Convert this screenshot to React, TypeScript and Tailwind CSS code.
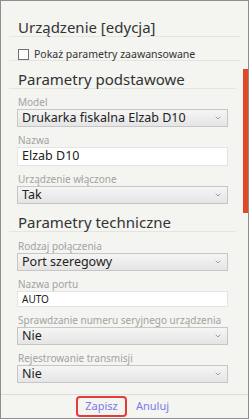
import { ChevronDown } from 'lucide-react'

interface Field {
  label: string
  value: string
  kind: 'select' | 'input' | 'small'
}

const basic: Field[] = [
  { label: 'Model', value: 'Drukarka fiskalna Elzab D10', kind: 'select' },
  { label: 'Nazwa', value: 'Elzab D10', kind: 'input' },
  { label: 'Urządzenie włączone', value: 'Tak', kind: 'select' },
]

const technical: Field[] = [
  { label: 'Rodzaj połączenia', value: 'Port szeregowy', kind: 'select' },
  { label: 'Nazwa portu', value: 'AUTO', kind: 'small' },
  { label: 'Sprawdzanie numeru seryjnego urządzenia', value: 'Nie', kind: 'select' },
  { label: 'Rejestrowanie transmisji', value: 'Nie', kind: 'select' },
]

function SectionTitle({ children, className = '' }: { children: string; className?: string }) {
  return (
    <div
      className={`mx-[8px] w-[227px] pl-[9px] border-b border-[#e4e4e0] text-[15px] leading-[18px] text-[#333] ${className}`}
    >
      {children}
    </div>
  )
}

function FieldRow({ field, first }: { field: Field; first?: boolean }) {
  return (
    <div className={`pl-[16px] ${first ? 'mt-[8px]' : 'mt-[7px]'}`}>
      <div className="pl-[1px] text-[10px] leading-[12px] text-[#a3a3a3]">{field.label}</div>
      {field.kind === 'select' && (
        <div className="mt-[1px] w-[211px] h-[18px] flex items-center justify-between pl-[4px] pr-[5px] border border-[#c6c6c6] bg-gradient-to-b from-[#f5f5f5] to-[#e5e5e5] text-[12.5px] text-[#222]">
          <span>{field.value}</span>
          <ChevronDown size={8} strokeWidth={2.5} className="text-[#8a8a8a]" />
        </div>
      )}
      {field.kind === 'input' && (
        <div className="mt-[1px] w-[211px] h-[19px] flex items-center pl-[4px] border border-[#e4e4e4] bg-white text-[12.5px] text-[#222]">
          {field.value}
        </div>
      )}
      {field.kind === 'small' && (
        <div className="mt-[1px] w-[211px] h-[16px] flex items-center pl-[4px] border border-[#e4e4e4] bg-white text-[10px] text-[#222]">
          {field.value}
        </div>
      )}
    </div>
  )
}

export default function App() {
  return (
    <div className="w-[250px] h-[420px] bg-white" style={{ fontFamily: '"Noto Sans", sans-serif' }}>
      <div className="w-[249px] h-[419px] border border-[#8e8e8e] bg-[#f4f4f0] flex flex-col">
        {/* Header */}
        <div className="mx-[8px] pl-[9px] pt-[17px] border-b border-[#e4e4e0] text-[15px] leading-[18px] text-[#333]">
          Urządzenie [edycja]
        </div>
        <div className="mx-[8px] pl-[9px] pt-[12px] h-[24px] border-b border-[#e4e4e0] flex items-start gap-[5px]">
          <div className="w-[11px] h-[11px] border border-[#707070] bg-white shrink-0" />
          <span className="text-[10.5px] leading-[11px] text-[#333]">Pokaż parametry zaawansowane</span>
        </div>

        {/* Scroll area */}
        <div className="relative flex-1 overflow-hidden">
          <SectionTitle className="mt-[9px]">Parametry podstawowe</SectionTitle>
          {basic.map((f) => (
            <FieldRow key={f.label} field={f} />
          ))}
          <SectionTitle className="mt-[9px]">Parametry techniczne</SectionTitle>
          {technical.map((f, i) => (
            <FieldRow key={f.label} field={f} first={i === 0} />
          ))}
          <div className="absolute right-0 top-[8px] w-[5px] h-[144px] bg-[#e04a26]" />
        </div>

        {/* Footer */}
        <div className="h-[24px] border-t border-[#dcdcd8] flex items-center pl-[75px] gap-[9px] text-[11px]">
          <button className="w-[51px] h-[21px] rounded-[4px] border-2 border-[#e43b3b] text-[#7a7af0]">
            Zapisz
          </button>
          <button className="text-[#7a7af0]">Anuluj</button>
        </div>
      </div>
    </div>
  )
}
